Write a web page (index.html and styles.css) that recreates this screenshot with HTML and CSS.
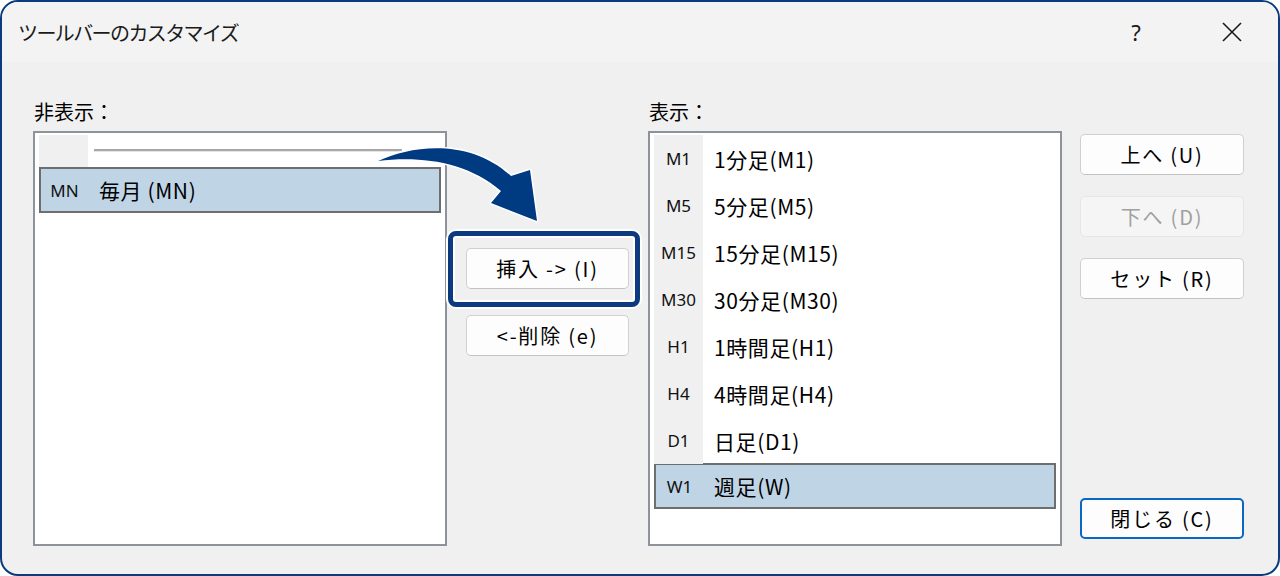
FILE: index.html
```html
<!DOCTYPE html>
<html lang="ja">
<head>
	<meta charset="UTF-8">
	<title>ツールバーのカスタマイズ</title>
	<link rel="stylesheet" href="styles.css">
</head>
<body>
	<div class="window">
		<div class="titlebar">
			<span class="title">ツールバーのカスタマイズ</span>
			<span class="help">?</span>
			<span class="close">
				<svg width="22" height="22" viewBox="0 0 22 22"><path d="M2 2L20 20M20 2L2 20" stroke="#1a1a1a" stroke-width="1.6" fill="none"/></svg>
			</span>
		</div>
		<div class="content">
			<div class="pane">
				<p class="label">非表示：</p>
				<ul class="list">
					<li class="row sep">
						<span class="code"></span>
						<span class="line"></span>
					</li>
					<li class="row selected">
						<span class="code">MN</span>
						<span class="name">毎月 (MN)</span>
					</li>
				</ul>
			</div>
			<div class="middle">
				<button class="btn">挿入 -&gt; (I)</button>
				<button class="btn">&lt;-削除 (e)</button>
			</div>
			<div class="pane">
				<p class="label">表示：</p>
				<ul class="list shown">
					<li class="row"><span class="code">M1</span><span class="name">1分足(M1)</span></li>
					<li class="row"><span class="code">M5</span><span class="name">5分足(M5)</span></li>
					<li class="row"><span class="code">M15</span><span class="name">15分足(M15)</span></li>
					<li class="row"><span class="code">M30</span><span class="name">30分足(M30)</span></li>
					<li class="row"><span class="code">H1</span><span class="name">1時間足(H1)</span></li>
					<li class="row"><span class="code">H4</span><span class="name">4時間足(H4)</span></li>
					<li class="row"><span class="code">D1</span><span class="name">日足(D1)</span></li>
					<li class="row selected"><span class="code">W1</span><span class="name">週足(W)</span></li>
				</ul>
			</div>
			<div class="side">
				<button class="btn">上へ (U)</button>
				<button class="btn" disabled>下へ (D)</button>
				<button class="btn">セット (R)</button>
				<button class="btn default">閉じる (C)</button>
			</div>
		</div>

		<!-- 説明用の注記 -->
		<div class="highlight"></div>
		<svg class="arrow" width="1280" height="576" viewBox="0 0 1280 576">
			<path d="M378 161 C412 145 470 138 511 176 L530 170 L537 221 L491 203 L501 191 C466 161 420 156 378 161 Z" fill="#003a80" stroke="#fff" stroke-width="3" stroke-linejoin="round" paint-order="stroke"/>
		</svg>
	</div>
</body>
</html>
```

FILE: styles.css
```css
html, body {
	margin: 0;
	padding: 0;
	background: #fff;
}

body {
	font-family: "Noto Sans CJK JP", "Noto Sans", sans-serif;
	color: #000;
}

ul, li, p {
	margin: 0;
	padding: 0;
}

.window {
	position: relative;
	width: 1280px;
	height: 576px;
	box-sizing: border-box;
	border: 2px solid #0b3a7e;
	border-radius: 18px;
	overflow: hidden;
	display: flex;
	flex-direction: column;
	background: #f0f0f0;
}

.titlebar {
	height: 60px;
	flex: none;
	background: #f3f3f3;
	display: flex;
	align-items: center;
	padding-left: 16px;
	color: #1a1a1a;
}

.title {
	font-size: 20px;
	letter-spacing: -1.6px;
	flex: 1;
}

.help {
	font-family: "Noto Sans", sans-serif;
	font-size: 22px;
	width: 30px;
	text-align: center;
	margin-right: 70px;
}

.close {
	display: flex;
	width: 22px;
	height: 22px;
	margin-right: 35px;
}

.content {
	flex: 1;
	display: flex;
	padding: 0 34px 0 31px;
}

.pane {
	width: 414px;
	display: flex;
	flex-direction: column;
}

.label {
	font-size: 20px;
	line-height: 24px;
	height: 24px;
	margin-top: 38px;
	margin-bottom: 7px;
	padding-left: 1px;
}

.list {
	list-style: none;
	height: 415px;
	box-sizing: border-box;
	border: 2px solid #8e939b;
	background: #fff;
	padding: 2px 4px;
}

.row {
	display: flex;
	align-items: center;
	height: 47px;
	box-sizing: border-box;
}

.code {
	width: 49px;
	height: 100%;
	flex: none;
	background: #f0f0f0;
	font-family: "Noto Sans", sans-serif;
	font-size: 17px;
	display: flex;
	align-items: center;
	justify-content: center;
	color: #111;
}

.name {
	font-size: 21px;
	padding-left: 11px;
	letter-spacing: 0.6px;
}

.row.sep {
	height: 32px;
}

.row.sep .line {
	width: 308px;
	height: 2px;
	margin-left: 6px;
	margin-top: -2px;
	background: #a8a8a8;
	border-bottom: 1px solid #e4e4e4;
}

.row.selected {
	height: 46px;
	background: #bfd5e6;
	border: 2px solid #6e6e6e;
}

.row.selected .code {
	background: transparent;
	width: 47px;
}

.list.shown .row.selected {
	margin-top: -1px;
}

.middle {
	width: 201px;
	display: flex;
	flex-direction: column;
	align-items: center;
	padding-top: 186px;
	gap: 26px;
}

.side {
	width: 164px;
	margin-left: 18px;
	display: flex;
	flex-direction: column;
	padding-top: 72px;
	padding-bottom: 35px;
	box-sizing: border-box;
	gap: 21px;
}

.btn {
	width: 164px;
	height: 41px;
	box-sizing: border-box;
	background: #fdfdfd;
	border: 1px solid #d0d0d0;
	border-bottom-color: #c2c2c2;
	border-radius: 5px;
	font-family: "Noto Sans CJK JP", "Noto Sans", sans-serif;
	font-size: 20px;
	color: #000;
	padding: 0;
	letter-spacing: 1.8px;
}

.middle .btn {
	width: 163px;
}

.btn[disabled] {
	background: #f5f5f5;
	border-color: #e6e6e6;
	color: #a0a0a0;
}

.btn.default {
	margin-top: auto;
	border: 2px solid #0a67c2;
}

.highlight {
	position: absolute;
	left: 446px;
	top: 229px;
	width: 192px;
	height: 76px;
	box-sizing: border-box;
	border: 5px solid #0b3a7e;
	border-radius: 8px;
	box-shadow: 0 0 0 2px #fff, inset 0 0 0 2px #fff;
}

.arrow {
	position: absolute;
	left: -2px;
	top: -2px;
	pointer-events: none;
}
```
